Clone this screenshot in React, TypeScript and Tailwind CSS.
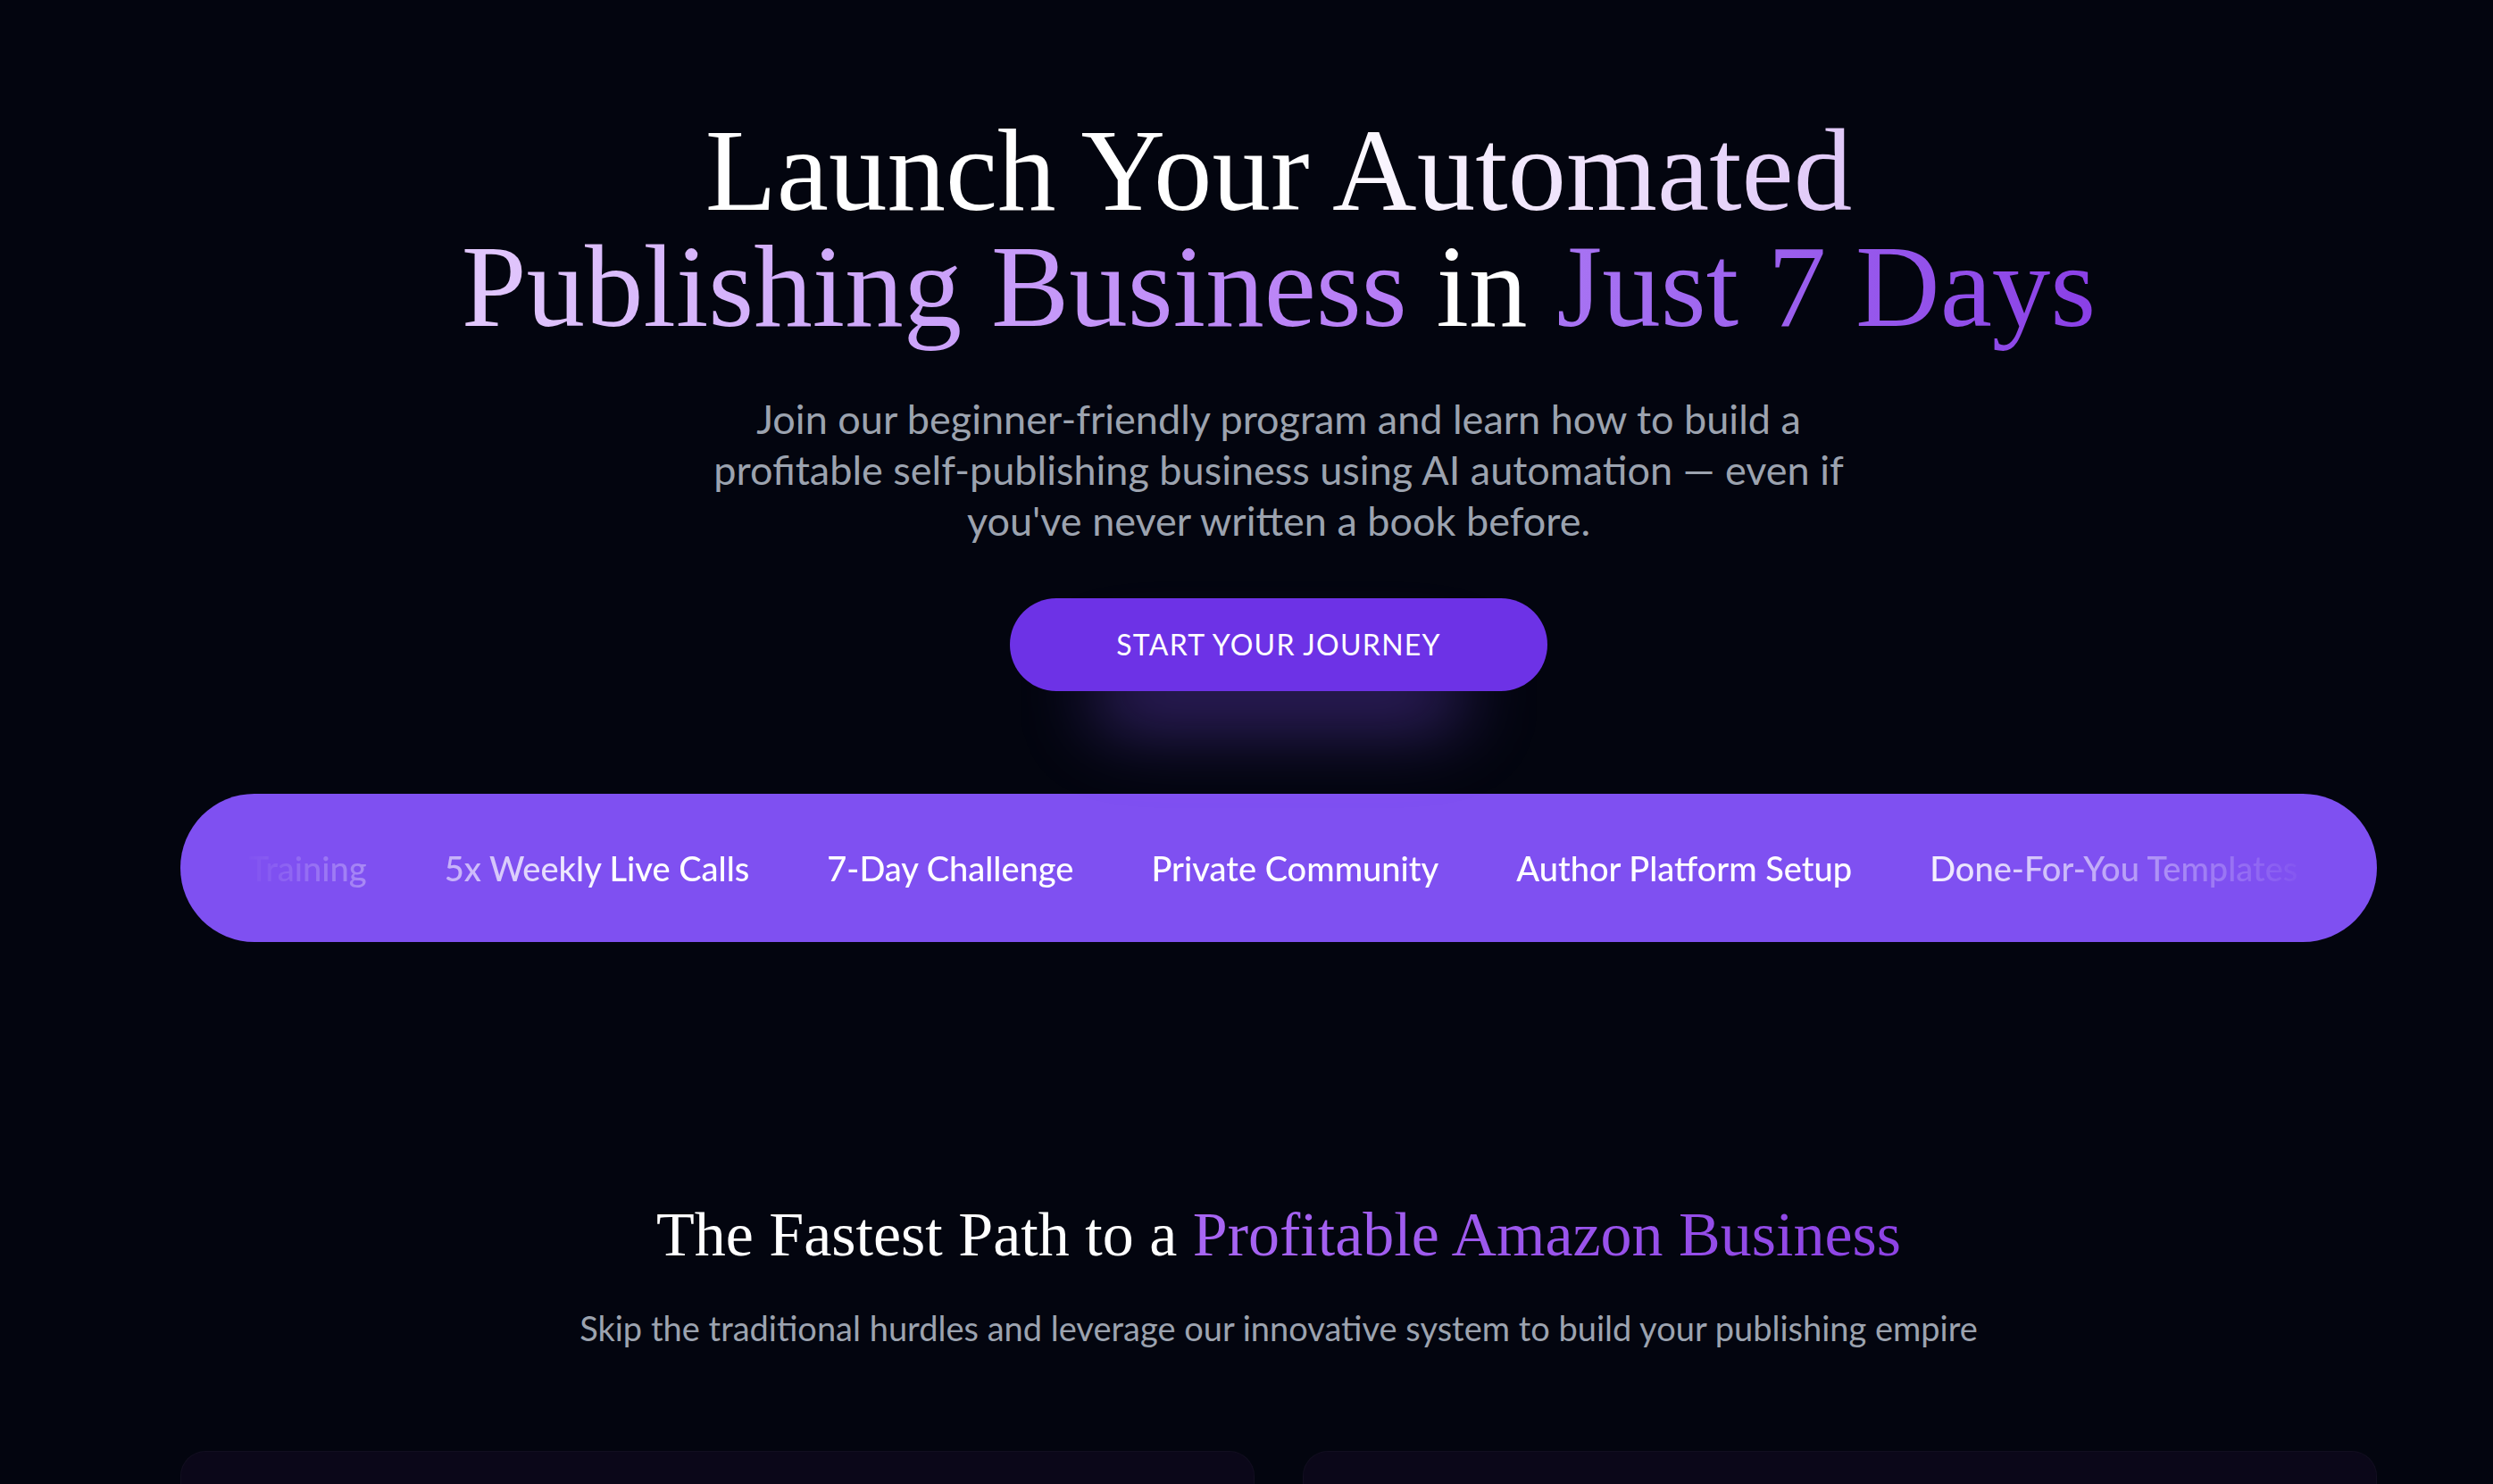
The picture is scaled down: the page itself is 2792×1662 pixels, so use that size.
const serif = 'font-["Liberation_Serif",_"Times_New_Roman",serif]';
const sans = 'font-["Lato",_"Noto_Sans",sans-serif]';

const features = [
  'Expert Training',
  '5x Weekly Live Calls',
  '7-Day Challenge',
  'Private Community',
  'Author Platform Setup',
  'Done-For-You Templates',
];

export default function App() {
  return (
    <div className={`h-screen overflow-hidden bg-[#03050f] text-white ${sans}`}>
      <div className="pl-[72px]">
        <section className="pt-[126px] flex flex-col items-center text-center">
          <h1 className={`${serif} text-[131px] leading-[130px] font-normal`}>
            <span className="bg-gradient-to-r from-white via-white to-[#e0c8f8] bg-clip-text text-transparent">
              Launch Your Automated
            </span>
            <br />
            <span className="bg-gradient-to-r from-[#e2c8fc] to-[#b57af5] bg-clip-text text-transparent">
              Publishing Business
            </span>{' '}
            <span className="text-white">in</span>{' '}
            <span className="bg-gradient-to-r from-[#a874f3] to-[#8a3fe6] bg-clip-text text-transparent">
              Just 7 Days
            </span>
          </h1>

          <p className="mt-[55px] text-[45px] leading-[57px] font-normal text-[#9ca3af]">
            Join our beginner-friendly program and learn how to build a
            <br />
            profitable self-publishing business using AI automation — even if
            <br />
            you've never written a book before.
          </p>

          <div className="relative mt-[58px]">
            <div className="absolute left-1/2 top-full -translate-x-1/2 -mt-[34px] w-[420px] h-[76px] rounded-full bg-[#7c4dee]/40 blur-2xl" />
            <button className="relative w-[602px] h-[104px] rounded-full bg-[#6d32e6] text-[32px] tracking-[0.04em] text-white">
              START YOUR JOURNEY
            </button>
          </div>
        </section>

        <section className="mt-[115px] px-[130px]">
          <div className="h-[166px] rounded-full bg-[#7f50f1] flex items-center px-[70px] overflow-hidden">
            <div className="flex-1 overflow-hidden [mask-image:linear-gradient(to_right,transparent_0%,black_18%,black_80%,transparent_100%)] [-webkit-mask-image:linear-gradient(to_right,transparent_0%,black_18%,black_80%,transparent_100%)]">
              <div className="flex items-center gap-[87px] whitespace-nowrap text-[38px] font-medium text-white -ml-[112px]">
                {features.map((f) => (
                  <span key={f}>{f}</span>
                ))}
              </div>
            </div>
          </div>
        </section>

        <section className="mt-[286px] flex flex-col items-center text-center">
          <h2 className={`${serif} text-[70px] leading-[84px] font-normal`}>
            The Fastest Path to a{' '}
            <span className="bg-gradient-to-r from-[#a866f3] to-[#8d42e4] bg-clip-text text-transparent">
              Profitable Amazon Business
            </span>
          </h2>
          <p className="mt-[38px] text-[38px] leading-[48px] font-normal text-[#9ca3af]">
            Skip the traditional hurdles and leverage our innovative system to build your publishing empire
          </p>
        </section>

        <section className="mt-[114px] px-[130px] grid grid-cols-2 gap-[54px]">
          <div className="h-[300px] rounded-[28px] bg-[#0b0719] border border-white/[0.03]" />
          <div className="h-[300px] rounded-[28px] bg-[#0b0719] border border-white/[0.03]" />
        </section>
      </div>
    </div>
  );
}
